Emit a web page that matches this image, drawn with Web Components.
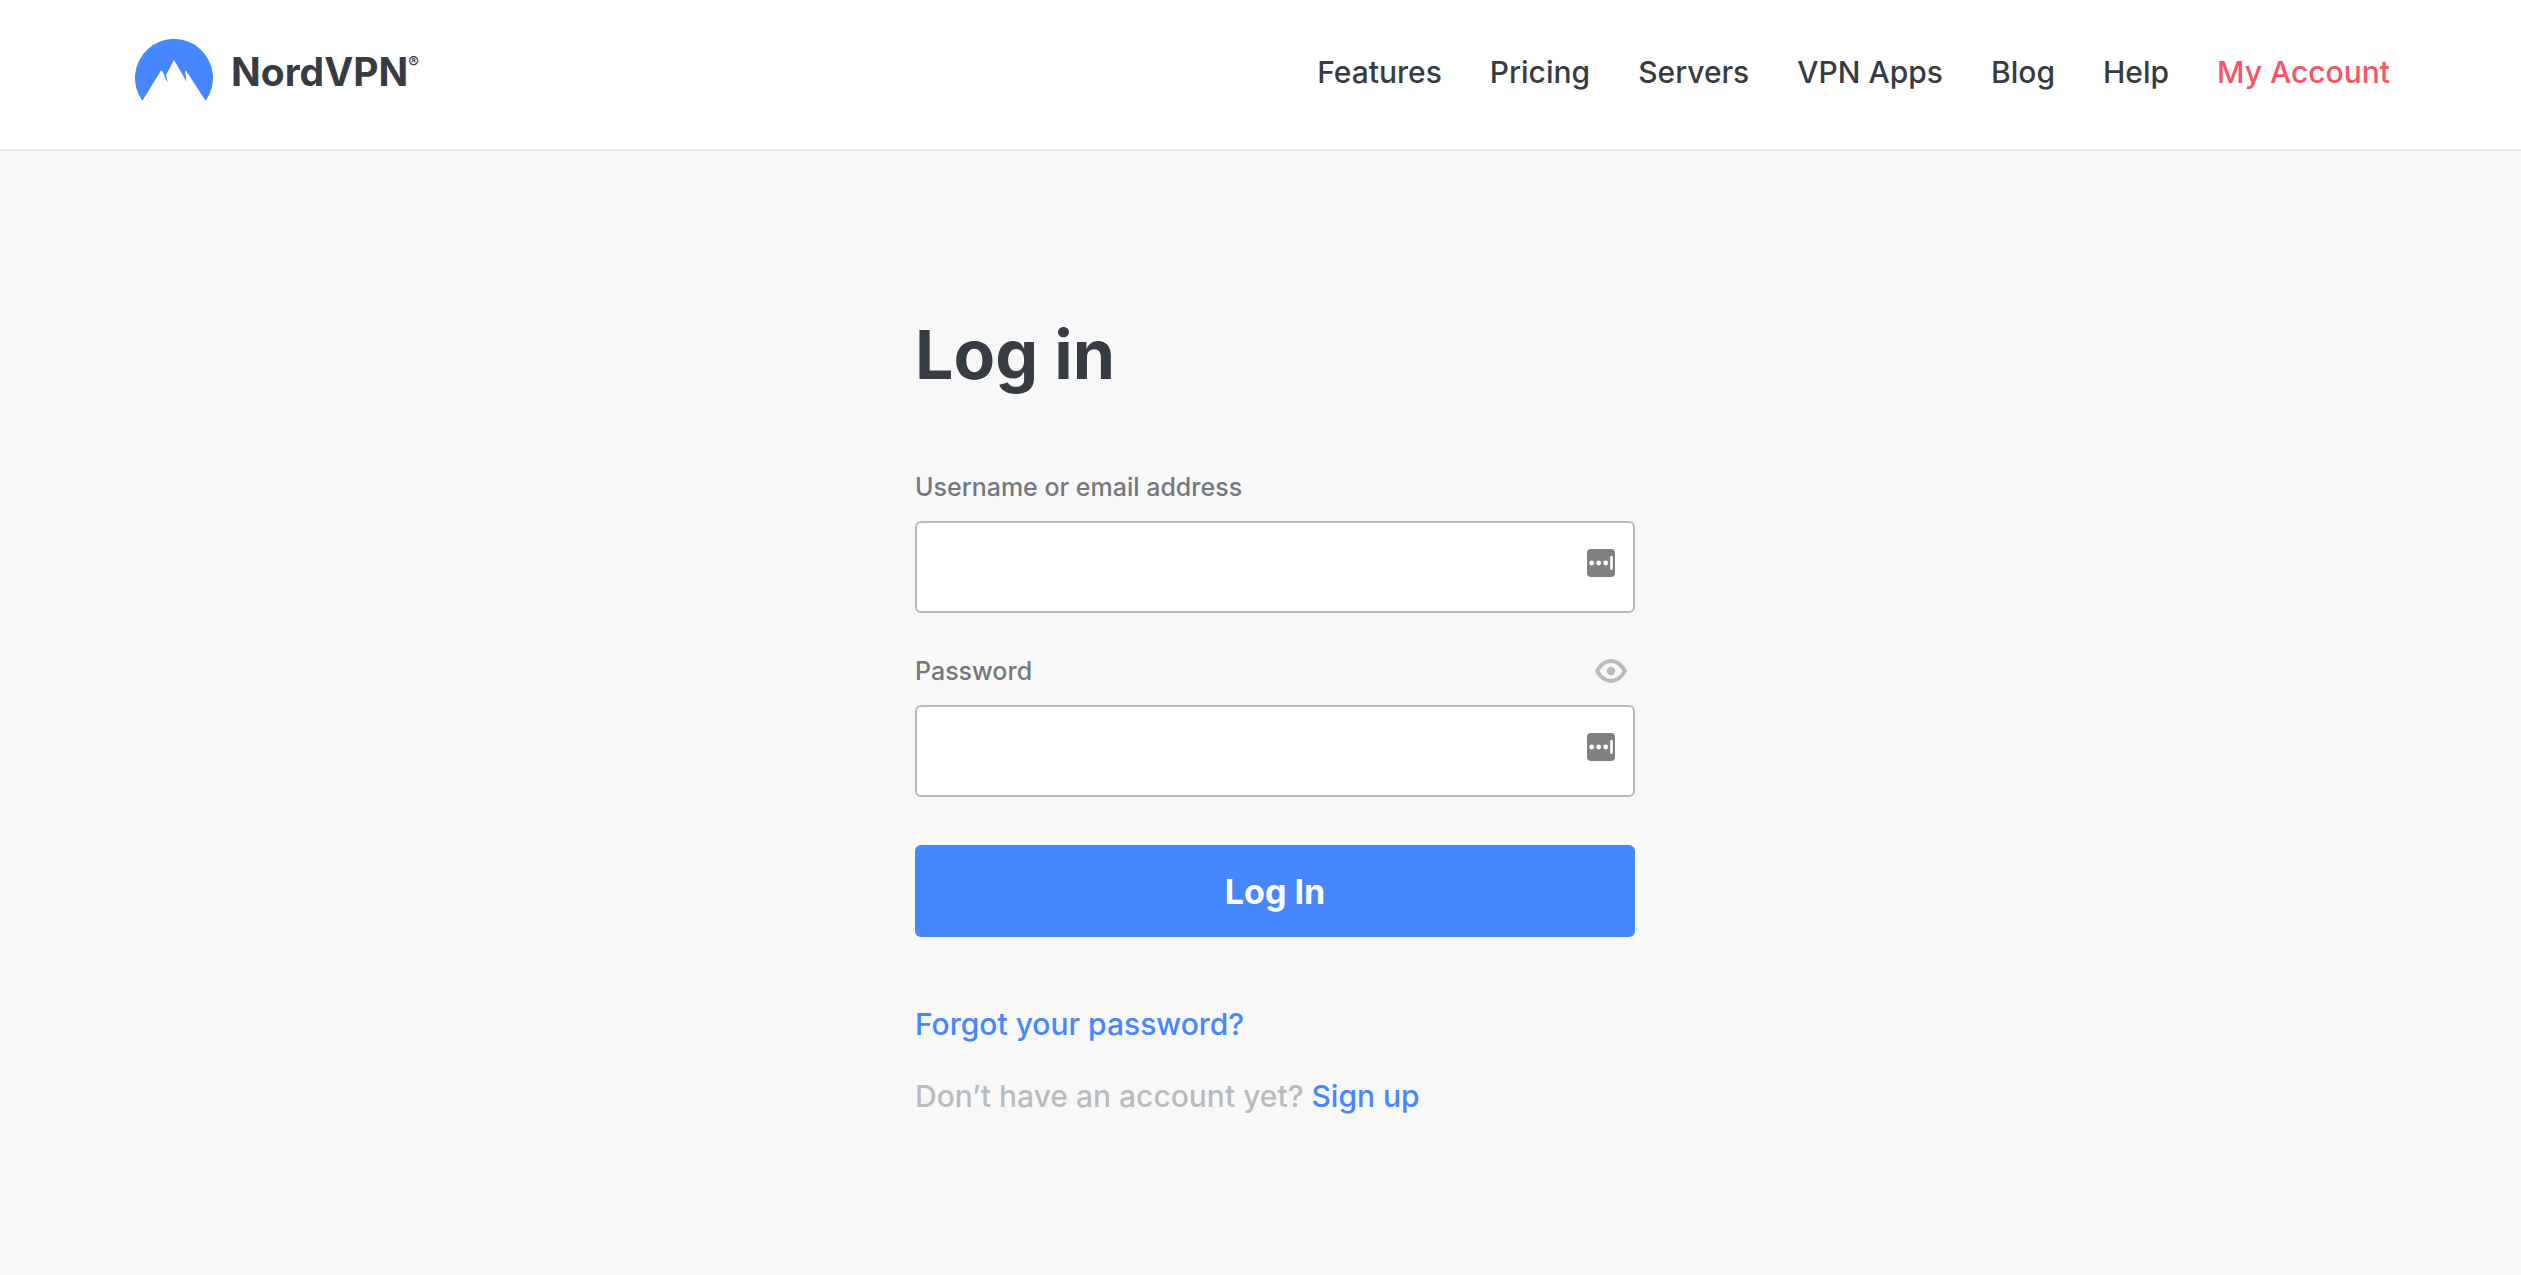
<!DOCTYPE html>
<html lang="en">
<head>
<meta charset="utf-8">
<meta name="viewport" content="width=device-width, initial-scale=1">
<title>Log in - NordVPN</title>
<style>
    :root {
        --blue: #4687ff;
        --red: #f85464;
        --dark: #373c43;
        --label: #74787e;
        --muted: #b9bbbf;
        --page: #f8f8f8;
    }
    body {
        margin: 0;
        min-height: 100vh;
        background: var(--page);
        color: var(--dark);
        font-family: Inter, "Liberation Sans", sans-serif;
    }
</style>
</head>
<body>

<site-header>
    <brand-logo slot="brand"></brand-logo>
    <nav-link href="#features">Features</nav-link>
    <nav-link href="#pricing">Pricing</nav-link>
    <nav-link href="#servers">Servers</nav-link>
    <nav-link href="#apps">VPN Apps</nav-link>
    <nav-link href="#blog">Blog</nav-link>
    <nav-link href="#help">Help</nav-link>
    <nav-link href="#account" accent>My Account</nav-link>
</site-header>

<login-panel>
    <span slot="title">Log in</span>
    <text-field name="username" type="text">Username or email address</text-field>
    <text-field name="password" type="password" toggle>Password</text-field>
    <submit-button slot="action">Log In</submit-button>
    <text-link slot="links" href="#forgot">Forgot your password?</text-link>
    <span slot="links">Don’t have an account yet? <text-link href="#signup">Sign up</text-link></span>
</login-panel>

<script>
/* Header bar: brand on the left, links on the right */
class SiteHeader extends HTMLElement {
    constructor() {
        super();
        this.attachShadow({ mode: 'open' });
        this.shadowRoot.innerHTML = `
            <style>
                :host { display: block; background: #fff; border-bottom: 2px solid #e6e6e7; }
                header {
                    display: flex;
                    align-items: center;
                    justify-content: space-between;
                    padding: 39px 131px 44px 135px;
                }
                nav { display: flex; gap: 48px; }
            </style>
            <header>
                <slot name="brand"></slot>
                <nav aria-label="Main"><slot></slot></nav>
            </header>
        `;
    }
}

class BrandLogo extends HTMLElement {
    constructor() {
        super();
        this.attachShadow({ mode: 'open' });
        this.shadowRoot.innerHTML = `
            <style>
                :host { display: block; }
                a {
                    display: flex;
                    align-items: center;
                    gap: 18px;
                    color: var(--dark);
                    text-decoration: none;
                }
                svg { display: block; }
                .name { display: flex; font: 700 39px/48px Inter, "Liberation Sans", sans-serif; }
                .mark { font-size: 16px; font-weight: 500; line-height: 28px; }
            </style>
            <a href="#home">
                <svg width="78" height="66" viewBox="0 0 78 66" aria-hidden="true">
                    <path fill="#4687ff" d="M7.4 61.8A39 39 0 1 1 70.6 61.8L51.6 32.4C51 31.3 50.4 31.8 50.3 33C50.1 34.6 51.2 36 51.4 42.4L39 21L31 36C31.5 38 32.2 40 32.7 43C30.8 40.5 29.7 38.5 29.5 36.2L27.2 32.3C26.6 31.4 26.1 31.4 25.6 32.2Z"/>
                </svg>
                <span class="name">NordVPN<span class="mark">®</span></span>
            </a>
        `;
    }
}

class NavLink extends HTMLElement {
    constructor() {
        super();
        this.attachShadow({ mode: 'open' });
        this.shadowRoot.innerHTML = `
            <style>
                :host { display: block; }
                a {
                    color: var(--dark);
                    font-size: 30px;
                    font-weight: 500;
                    line-height: 40px;
                    text-decoration: none;
                    white-space: nowrap;
                }
                :host([accent]) a { color: var(--red); }
            </style>
            <a><slot></slot></a>
        `;
    }

    connectedCallback() {
        this.shadowRoot.querySelector('a').href = this.getAttribute('href') || '#';
    }
}

class LoginPanel extends HTMLElement {
    constructor() {
        super();
        this.attachShadow({ mode: 'open' });
        this.shadowRoot.innerHTML = `
            <style>
                :host { display: block; padding: 163px 0 100px 29px; }
                form { max-width: 720px; margin: 0 auto; }
                h1 { margin: 0 0 77px; font-size: 68px; font-weight: 700; line-height: 80px; }
                .fields { display: grid; gap: 42px; }
                .action { margin-top: 48px; }
                .links {
                    display: grid;
                    justify-items: start;
                    gap: 32px;
                    margin-top: 67px;
                    color: var(--muted);
                    font-size: 30px;
                    font-weight: 500;
                    line-height: 40px;
                }
            </style>
            <form>
                <h1><slot name="title"></slot></h1>
                <div class="fields"><slot></slot></div>
                <div class="action"><slot name="action"></slot></div>
                <div class="links"><slot name="links"></slot></div>
            </form>
        `;
    }
}

/* Labelled input, with a reveal button when [toggle] is set */
class TextField extends HTMLElement {
    constructor() {
        super();
        this.attachShadow({ mode: 'open' });
        this.shadowRoot.innerHTML = `
            <style>
                :host { display: block; }
                .top {
                    display: flex;
                    align-items: center;
                    justify-content: space-between;
                    margin-bottom: 18px;
                    padding-right: 8px;
                }
                label { color: var(--label); font-size: 25px; font-weight: 500; line-height: 32px; }
                .reveal { padding: 0; border: 0; background: none; cursor: pointer; }
                .reveal svg, .manager { display: block; }
                :host(:not([toggle])) .reveal { display: none; }
                .box { position: relative; }
                input {
                    display: block;
                    width: 100%;
                    height: 92px;
                    box-sizing: border-box;
                    padding: 0 64px 0 24px;
                    border: 2px solid #b7b8bd;
                    border-radius: 6px;
                    background: #fff;
                    color: var(--dark);
                    font: inherit;
                    font-size: 30px;
                    outline-color: var(--blue);
                }
                /* password manager badge lies over the input */
                .manager { position: absolute; top: 28px; right: 20px; }
            </style>
            <div class="top">
                <label for="control"><slot></slot></label>
                <button class="reveal" type="button" aria-label="Show password">
                    <svg width="32" height="24" viewBox="0 0 32 24">
                        <path fill="none" stroke="#b9bbbf" stroke-width="4" stroke-linejoin="round" d="M2 12C5.5 6 10.5 2 16 2S26.5 6 30 12C26.5 18 21.5 22 16 22S5.5 18 2 12Z"/>
                        <circle cx="16" cy="12" r="4.2" fill="#b9bbbf"/>
                    </svg>
                </button>
            </div>
            <div class="box">
                <input id="control">
                <svg class="manager" width="28" height="28" viewBox="0 0 28 28" aria-hidden="true">
                    <rect width="28" height="28" rx="4" fill="#7f8082"/>
                    <g fill="#fff">
                        <circle cx="4.7" cy="14" r="2.4"/>
                        <circle cx="11.7" cy="14" r="2.4"/>
                        <circle cx="18.7" cy="14" r="2.4"/>
                        <rect x="23.2" y="7" width="2.6" height="14" rx="1"/>
                    </g>
                </svg>
            </div>
        `;
        this.inputEl = this.shadowRoot.querySelector('input');
        this.shadowRoot.querySelector('.reveal').addEventListener('click', () => {
            this.inputEl.type = this.inputEl.type === 'password' ? 'text' : 'password';
        });
    }

    connectedCallback() {
        this.inputEl.type = this.getAttribute('type') || 'text';
        this.inputEl.name = this.getAttribute('name') || '';
    }
}

class SubmitButton extends HTMLElement {
    constructor() {
        super();
        this.attachShadow({ mode: 'open' });
        this.shadowRoot.innerHTML = `
            <style>
                :host { display: block; }
                button {
                    display: block;
                    width: 100%;
                    height: 92px;
                    border: 0;
                    border-radius: 6px;
                    background: var(--blue);
                    color: #fff;
                    font: inherit;
                    font-size: 34px;
                    font-weight: 700;
                    cursor: pointer;
                }
            </style>
            <button type="submit"><slot></slot></button>
        `;
    }
}

class TextLink extends HTMLElement {
    constructor() {
        super();
        this.attachShadow({ mode: 'open' });
        this.shadowRoot.innerHTML = `
            <style>
                :host { display: inline; }
                a { color: var(--blue); text-decoration: none; }
            </style>
            <a><slot></slot></a>
        `;
    }

    connectedCallback() {
        this.shadowRoot.querySelector('a').href = this.getAttribute('href') || '#';
    }
}

customElements.define('site-header', SiteHeader);
customElements.define('brand-logo', BrandLogo);
customElements.define('nav-link', NavLink);
customElements.define('login-panel', LoginPanel);
customElements.define('text-field', TextField);
customElements.define('submit-button', SubmitButton);
customElements.define('text-link', TextLink);
</script>
</body>
</html>
